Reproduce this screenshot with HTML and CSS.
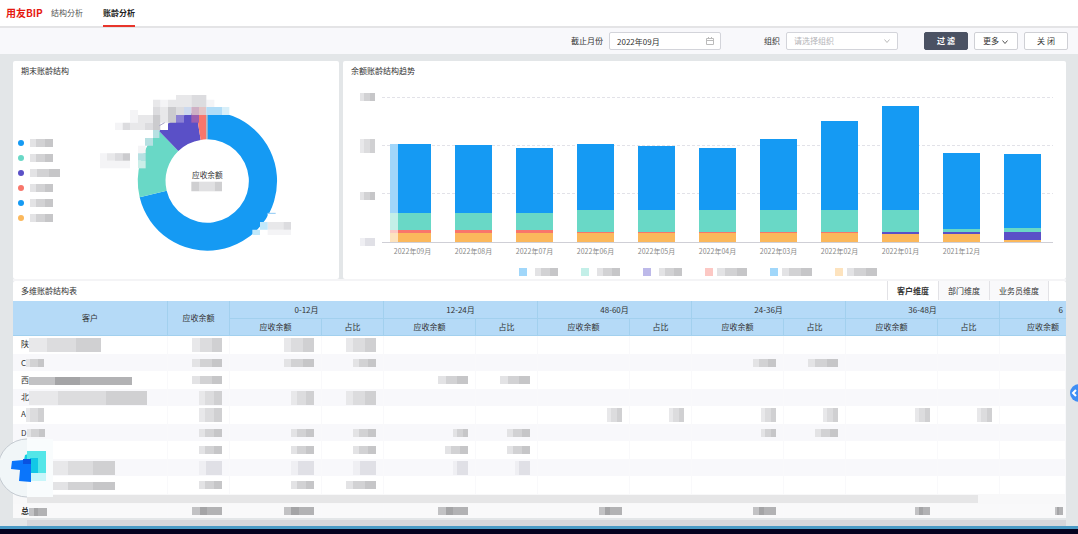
FILE: index.html
```
<!DOCTYPE html>
<html lang="zh-CN">
	<head>
		<meta charset="UTF-8">
		<title>账龄分析</title>
		<link rel="stylesheet" href="styles.css">
	</head>
	<body>
		<header id="header">
			<h1>用友BIP</h1>
			<nav>
				<a href="#">结构分析</a>
				<a href="#" class="active">账龄分析</a>
			</nav>
		</header>
		<form id="filter">
			<label for="month">截止月份</label>
			<div class="field month">
				<input type="text" id="month" value="2022年09月">
				<svg width="8" height="8" viewBox="0 0 8 8"><path d="M.5 1.5h7v6h-7zM.5 3.5h7M2.500 0v2M5.500 0v2"/></svg>
			</div>
			<label for="org">组织</label>
			<div class="field org">
				<select id="org"><option>请选择组织</option></select>
				<svg width="8" height="8" viewBox="0 0 8 8"><path d="M1.500 2.500l2.500 3 2.500-3"/></svg>
			</div>
			<button type="button" class="primary">过 滤</button>
			<button type="button">更多 <svg width="8" height="8" viewBox="0 0 8 8"><path d="M1.500 2.500l2.500 3 2.500-3"/></svg></button>
			<button type="button">关 闭</button>
		</form>
		<main>
			<div class="charts">
				<section class="card pie">
					<h2>期末账龄结构</h2>
					<div class="pie-body">
						<ul class="pie-legend">
							<li class="c1"><span class="mask w23"></span></li>
							<li class="c2"><span class="mask w23"></span></li>
							<li class="c3"><span class="mask w30"></span></li>
							<li class="c4"><span class="mask w23"></span></li>
							<li class="c1"><span class="mask w23"></span></li>
							<li class="c5"><span class="mask w23"></span></li>
						</ul>
						<svg class="donut" width="240" height="180" viewBox="285 75 720 540">
							<g transform="translate(622 363)">
								<path fill="#159af3" d="M0-209A209 209 0 1 1-203 49L-122 29A125 125 0 1 0 0-125Z"/>
								<path fill="#69d8c6" d="M-203 49A209 209 0 0 1-145-150L-87-90A125 125 0 0 0-122 29Z"/>
								<path fill="#5a50c7" d="M-145-150A209 209 0 0 1-33-206L-20-123A125 125 0 0 0-87-90Z"/>
								<path fill="#f8766b" d="M-33-206A209 209 0 0 1-3-209L-3-125A125 125 0 0 0-20-123Z"/>
								<path fill="#9aaebd" d="M-3-209H1V-125H-3Z"/>
							</g>
							<!-- 标签 -->
							<path fill="#fff" d="M597 141h100v24h-100zM481 188h23v22h-23zM435 210h24v24h-24zM414 257h21v23h-21zM803 460h35v26h-35z"/>
							<path fill="#f4f4f6" d="M390 150h24v38h-24zM345 188h23v22h-23zM481 119h23v22h-23zM619 119h24v22h-24zM300 280h21v22h-21zM300 302h90v23h-90zM803 509h70v16h-70zM414 257h23v23h-23z"/>
							<path fill="#e8e8ea" d="M459 119h22v22h-22zM504 119h24v22h-24zM528 105h46v36h-46zM481 141h23v47h-23zM414 165h45v23h-45zM390 188h45v22h-45zM321 280h47v22h-47zM803 486h47v23h-47z"/>
							<path fill="#dcdcdf" d="M574 105h45v36h-45zM459 141h22v24h-22zM528 141h24v24h-24zM368 188h22v22h-22zM435 188h24v22h-24zM345 280h23v22h-23zM850 486h23v23h-23z"/>
							<path fill="#cbcbce" d="M504 141h24v47h-24zM459 165h22v45h-22zM368 280h22v22h-22z"/>
							<path fill="#ccd9ee" d="M552 141h22v24h-22z"/>
							<path fill="#ceb0c4" d="M574 141h23v24h-23z"/>
							<path fill="#e3c4c4" d="M597 141h22v24h-22z"/>
							<path fill="#b0dcf7" d="M619 141h47v24h-47z"/>
							<path fill="#d8eff9" d="M666 141h22v24h-22z"/>
							<path fill="#8c82d4" d="M528 165h24v23h-24z"/>
							<path fill="#9c5faf" d="M574 165h23v23h-23z"/>
							<path fill="#b6e0e2" d="M459 210h19v24h-19zM435 234h24v23h-24zM414 280h23v22h-23z"/>
							<path fill="#cbeee8" d="M414 302h23v23h-23z"/>
							<path fill="#c2e8fa" d="M780 486h23v23h-23zM757 509h23v16h-23z"/>
							<path stroke="#8cc8f4" stroke-width="3" d="M803 460h24"/>
							<path stroke="#a9a4c8" stroke-width="3" d="M478 197l16-9"/>
							<text x="622" y="353">应收余额</text>
							<path fill="#cfcfd1" d="M574 365h23v29h-23zM643 365h23v29h-23z"/>
							<path fill="#e0e0e2" d="M597 365h46v29h-46z"/>
						</svg>
					</div>
				</section>
				<section class="card trend">
					<h2>余额账龄结构趋势</h2>
					<div class="plot">
						<div class="y-axis">
							<span class="mask w15"></span>
							<span class="mask w15 tall"></span>
							<span class="mask w15"></span>
							<span class="mask w15 light"></span>
						</div>
						<div id="bars"></div>
					</div>
					<ul class="bar-legend">
						<li class="c1"><span class="mask w23"></span></li>
						<li class="c2"><span class="mask w23"></span></li>
						<li class="c3"><span class="mask w23"></span></li>
						<li class="c4"><span class="mask w30"></span></li>
						<li class="c1"><span class="mask w30"></span></li>
						<li class="c5"><span class="mask w30"></span></li>
					</ul>
				</section>
			</div>
			<section class="card detail">
				<div class="detail-head">
					<h2>多维账龄结构表</h2>
					<div class="tabs">
						<button type="button" class="active">客户维度</button>
						<button type="button">部门维度</button>
						<button type="button">业务员维度</button>
					</div>
				</div>
				<table>
					<colgroup>
						<col class="name"><col class="total">
						<col class="amount"><col class="rate">
						<col class="amount"><col class="rate">
						<col class="amount"><col class="rate">
						<col class="amount"><col class="rate">
						<col class="amount"><col class="rate">
						<col>
					</colgroup>
					<thead>
						<tr>
							<th rowspan="2">客户</th>
							<th rowspan="2">应收余额</th>
							<th colspan="2">0-12月</th>
							<th colspan="2">12-24月</th>
							<th colspan="2">48-60月</th>
							<th colspan="2">24-36月</th>
							<th colspan="2">36-48月</th>
							<th class="cut">6</th>
						</tr>
						<tr>
							<th>应收余额</th><th>占比</th>
							<th>应收余额</th><th>占比</th>
							<th>应收余额</th><th>占比</th>
							<th>应收余额</th><th>占比</th>
							<th>应收余额</th><th>占比</th>
							<th class="last">应收余额</th>
						</tr>
					</thead>
					<tbody id="rows"></tbody>
					<tfoot>
						<tr class="scroll"><td colspan="13"><div></div></td></tr>
						<tr id="sum"></tr>
					</tfoot>
				</table>
			</section>
			<div class="page-scroll"></div>
		</main>
		<footer id="taskbar"></footer>
		<svg class="assistant" width="56" height="60" viewBox="0 0 56 60">
			<path fill="#f1f6f8" stroke="#c3c9d0" d="M27 1A29 29 0 0 0 27 59"/>
			<path fill="#f9fcfd" d="M27 1h26v58h-26z"/>
			<path fill="#12cfe0" d="M25 17l3-1v6h-4z"/>
			<path fill="#54e6e8" d="M27 13h19v22h-19z"/>
			<path fill="#12c8e6" d="M30 20h8v15h-8z"/>
			<path fill="#c8f6fa" d="M31 35h15v8h-15z"/>
			<path fill="#0a75fb" d="M12 23l11-1 8-1v23l-12-1 1-11-9-1z"/>
			<path fill="#0a52e0" d="M23 21h8v5h-8z"/>
		</svg>
		<button type="button" class="drawer" aria-label="展开"><svg width="8" height="10" viewBox="0 0 8 10"><path d="M6 2L3 5l3 3"/></svg></button>
		<script>
		(function() {
			// 各段高度: 0-12月, 12-24月, 24-36月, 36-48月, 60月以上
			var months = [
				["2022年09月", 69, 17, 0, 3, 9],
				["2022年08月", 68, 17, 0, 3, 9],
				["2022年07月", 65, 17, 0, 3, 9],
				["2022年06月", 66, 22, 0, 1, 9],
				["2022年05月", 64, 22, 0, 1, 9],
				["2022年04月", 62, 22, 0, 1, 9],
				["2022年03月", 71, 22, 0, 1, 9],
				["2022年02月", 89, 22, 0, 1, 9],
				["2022年01月", 104, 22, 2, 0, 8],
				["2021年12月", 76, 3, 2, 0, 8],
				["", 74, 4, 8, 0, 2]
			];
			var html = "";
			for (var i = 0; i < months.length; i += 1) {
				html += '<div class="month-col"><div class="stack">';
				for (var j = 1; j < 6; j += 1) {
					html += '<i class="c' + j + '" style="height:' + months[i][j] + 'px"></i>';
				}
				html += '</div><span>' + months[i][0] + '</span></div>';
			}
			document.getElementById("bars").innerHTML = html;

			function mask(cls) {
				return cls ? '<span class="mask ' + cls + '"></span>' : "";
			}
			function cells(row) {
				var s = '<td>' + row[0] + mask(row[1]) + '</td>';
				for (var k = 2; k < 14; k += 1) {
					s += '<td>' + mask(row[k]) + '</td>';
				}
				return s;
			}
			var rows = [
				["陕", "w72 tall", "w30 tall", "w30 tall", "w30 tall"],
				["C", "w18", "w30", "w30", "w23", "", "", "", "", "w23", "w30"],
				["西", "w103 dark", "w30", "", "", "w30", "w30"],
				["北", "w118 tall", "w23 tall", "w23 tall", "w30 tall"],
				["A", "w18 tall", "w23 tall", "", "", "", "", "w15 tall", "w15 tall", "w15 tall", "w15 tall", "w15 tall", "w15 tall"],
				["D", "w18", "w23", "w23", "w23", "w15", "w23", "", "", "w15", "w23"],
				["", "", "w23", "w23", "w23", "w23", "w23"],
				["", "w62 tall", "w23 tall light", "w23 tall light", "w23 tall light", "w15 tall light", "w15 tall light"],
				["", "w62", "w23", "w23", "w30"]
			];
			var body = "";
			for (var r = 0; r < rows.length; r += 1) {
				body += '<tr>' + cells(rows[r]) + '</tr>';
			}
			document.getElementById("rows").innerHTML = body;
			document.getElementById("sum").innerHTML = cells(["总", "w18 dark", "w30 dark", "w30 dark", "", "w30 dark", "", "w23 dark", "", "w23 dark", "", "w15 dark", "", "w8 dark"]);
		})();
		</script>
	</body>
</html>
```
FILE: styles.css
```
* {
	margin: 0;
	padding: 0;
	box-sizing: border-box;
}
body {
	display: flex;
	flex-direction: column;
	min-height: 100vh;
	font: 8px/12px "Noto Sans CJK SC", sans-serif;
	color: #333;
	background-color: #e3e6e8;
	overflow: hidden;
}
ul {
	list-style: none;
}
button, input, select {
	font: inherit;
	color: inherit;
}
svg {
	fill: none;
	stroke: none;
}
#header {
	display: flex;
	align-items: center;
	height: 28px;
	padding-left: 6px;
	background-color: #fff;
	border-bottom: 2px solid #e4e4e6;
}
#header h1 {
	width: 45px;
	font-size: 10px;
	color: #e5190f;
	white-space: nowrap;
}
#header nav {
	display: flex;
	gap: 20px;
	height: 26px;
}
#header a {
	height: 27px;
	line-height: 26px;
	color: #555;
	text-decoration: none;
}
#header a.active {
	font-weight: bold;
	color: #222;
	border-bottom: 2px solid #e8352b;
}
#filter {
	display: flex;
	align-items: center;
	justify-content: flex-end;
	height: 26px;
	padding-right: 10px;
	background-color: #f8f8fb;
}
#filter label {
	margin-right: 6px;
}
.field {
	position: relative;
	width: 112px;
	height: 18px;
}
.field.month {
	margin-right: 43px;
}
.field.org {
	margin-right: 26px;
}
.field input, .field select {
	display: block;
	width: 100%;
	height: 18px;
	padding: 0 7px;
	background-color: #fff;
	border: 1px solid #d3d4da;
	border-radius: 2px;
	appearance: none;
}
.field select {
	color: #b4b4b8;
}
.field svg {
	position: absolute;
	right: 7px;
	top: 5px;
	stroke: #bbb;
}
#filter button {
	width: 44px;
	height: 18px;
	margin-left: 6px;
	background-color: #fff;
	border: 1px solid #cfd0d5;
	border-radius: 2px;
}
#filter button svg {
	stroke: #555;
	vertical-align: middle;
}
#filter button.primary {
	margin-left: 0;
	color: #fff;
	font-weight: bold;
	background-color: #4b5263;
	border-color: #4b5263;
}
main {
	flex: 1;
	padding: 7px 12px 0 13px;
}
.card {
	background-color: #fff;
	border-radius: 2px;
}
.card h2 {
	padding-left: 8px;
	font-size: 8px;
	font-weight: normal;
	line-height: 20px;
}
.charts {
	display: flex;
	gap: 4px;
	height: 220px;
	border-bottom: 2px solid #f4f4f6;
}
.pie {
	flex: 326;
}
.trend {
	flex: 723;
}
.mask {
	display: inline-block;
	height: 8px;
	vertical-align: middle;
	background-image: linear-gradient(90deg, #e3e3e5 25%, #d2d2d4 25%, #d2d2d4 65%, #c6c6c8 65%);
}
.mask.tall {
	height: 14px;
	background-image: linear-gradient(90deg, #e8e8ea 25%, #dcdcde 25%, #dcdcde 65%, #d0d0d2 65%);
}
.mask.light {
	background-image: linear-gradient(90deg, #efeff3 30%, #e0e0e6 30%);
}
.mask.dark {
	background-image: linear-gradient(90deg, #c2c2c4 25%, #a4a4a6 25%, #a4a4a6 50%, #b2b2b4 50%);
}
.w8 { width: 8px; }
.w15 { width: 15px; }
.w18 { width: 18px; }
.w23 { width: 23px; }
.w30 { width: 30px; }
.w62 { width: 62px; }
.w72 { width: 72px; }
.w103 { width: 103px; }
.w118 { width: 118px; }

.pie-body {
	display: flex;
	padding: 4px 0 0 5px;
}
.pie-legend {
	width: 77px;
	padding-top: 50px;
}
.pie-legend li {
	display: flex;
	align-items: center;
	gap: 6px;
	height: 15px;
}
.pie-legend li::before {
	content: "";
	width: 6px;
	height: 6px;
	border-radius: 50%;
	background-color: var(--c);
}
.donut text {
	font-size: 23px;
	fill: #333;
	text-anchor: middle;
}
.c1 { --c: #159af3; }
.c2 { --c: #69d8c6; }
.c3 { --c: #5a50c7; }
.c4 { --c: #f8766b; }
.c5 { --c: #fbb85c; }

.plot {
	display: flex;
	height: 179px;
	padding: 16px 13px 0 9px;
}
.y-axis {
	display: flex;
	flex-direction: column;
	justify-content: space-between;
	width: 30px;
	height: 153px;
	margin-top: -4px;
	padding-left: 8px;
}
#bars {
	display: grid;
	grid-template-columns: repeat(11, 1fr);
	flex: 1;
	height: 146px;
	border-bottom: 1px solid #cfcfd6;
	background: repeating-linear-gradient(90deg, #e2e2e8 0 3px, #fff 3px 5px);
	position: relative;
}
#bars::before {
	content: "";
	position: absolute;
	inset: 0;
	background: linear-gradient(#fff, #fff) 0 1px / 100% 47px no-repeat, linear-gradient(#fff, #fff) 0 49px / 100% 47px no-repeat, linear-gradient(#fff, #fff) 0 97px / 100% 48px no-repeat;
}
.month-col {
	position: relative;
	height: 145px;
	text-align: center;
}
.stack {
	display: flex;
	flex-direction: column;
	justify-content: flex-end;
	width: 37px;
	height: 145px;
	margin: 0 auto;
}
.stack i {
	background-color: var(--c);
}
.month-col:first-child i {
	margin-left: -4px;
	border-left: 8px solid rgba(255, 255, 255, .6);
}
.month-col span {
	display: block;
	font-size: 7px;
	line-height: 18px;
	color: #888;
	white-space: nowrap;
}
.bar-legend {
	display: flex;
	justify-content: center;
	gap: 23px;
	padding: 8px 14px 0 0;
}
.bar-legend li {
	display: flex;
}
.bar-legend li::before {
	content: "";
	width: 8px;
	height: 8px;
	background-color: var(--c);
	opacity: .4;
}
.bar-legend .mask {
	margin-left: 8px;
}
.bar-legend .w30 {
	margin-left: 4px;
}
.detail-head {
	display: flex;
	justify-content: space-between;
	height: 20px;
}
.tabs {
	display: flex;
	margin-right: 17px;
	border-right: 1px solid #e2e2e6;
}
.tabs button {
	height: 19px;
	padding: 0 9px;
	background-color: #f9f9fb;
	border: none;
	border-left: 1px solid #e2e2e6;
}
.tabs button.active {
	font-weight: bold;
	background-color: #fff;
}
table {
	width: 100%;
	table-layout: fixed;
	border-collapse: separate;
	border-spacing: 0;
}
col.name { width: 155px; }
col.total { width: 62px; }
col.amount { width: 92px; }
col.rate { width: 62px; }
th {
	height: 18px;
	font-weight: normal;
	line-height: 10px;
	background-color: #b5daf7;
	border-right: 1px solid #a2d0ee;
	border-bottom: 1px solid #a2d0ee;
}
thead tr:last-child th {
	height: 17px;
}
th.last, th.cut {
	text-align: right;
	padding-right: 7px;
	border-right: none;
}
th.cut {
	padding-right: 3px;
}
td {
	height: 18px;
	padding-right: 7px;
	line-height: 10px;
	text-align: right;
	font-size: 8px;
	white-space: nowrap;
	border-right: 1px solid #f9f9fb;
}
tbody tr:nth-child(even) td {
	height: 17px;
	background-color: #f8f8fb;
}
td:first-child {
	padding: 0 0 0 8px;
	text-align: left;
}
td .mask {
	display: block;
	margin-left: auto;
}
td:first-child .mask {
	display: inline-block;
	margin-left: 0;
}
td:first-child .w62 {
	margin-left: 32px;
}
td:last-child {
	padding-right: 2px;
}
tr.scroll td {
	height: 10px;
	padding: 0 87px 0 14px;
	background-color: #f8f8f9;
}
tr.scroll div {
	height: 8px;
	background-color: #e6e6e7;
}
#sum td {
	height: 14px;
	background-color: #f9f9fa;
	font-weight: bold;
}
.page-scroll {
	height: 6px;
	margin: 2px 0 0 14px;
	background-color: #d6d6db;
}
#taskbar {
	height: 8px;
	background-color: #04021f;
	border-top: 3px solid #4a9ac6;
}
.assistant {
	position: fixed;
	left: 0;
	bottom: 36px;
}
.drawer {
	position: fixed;
	right: -10px;
	bottom: 132px;
	width: 18px;
	height: 18px;
	padding-right: 8px;
	border: none;
	border-radius: 50%;
	background-color: #3f8ef5;
}
.drawer svg {
	display: block;
	stroke: #fff;
	stroke-width: 2;
}
```
